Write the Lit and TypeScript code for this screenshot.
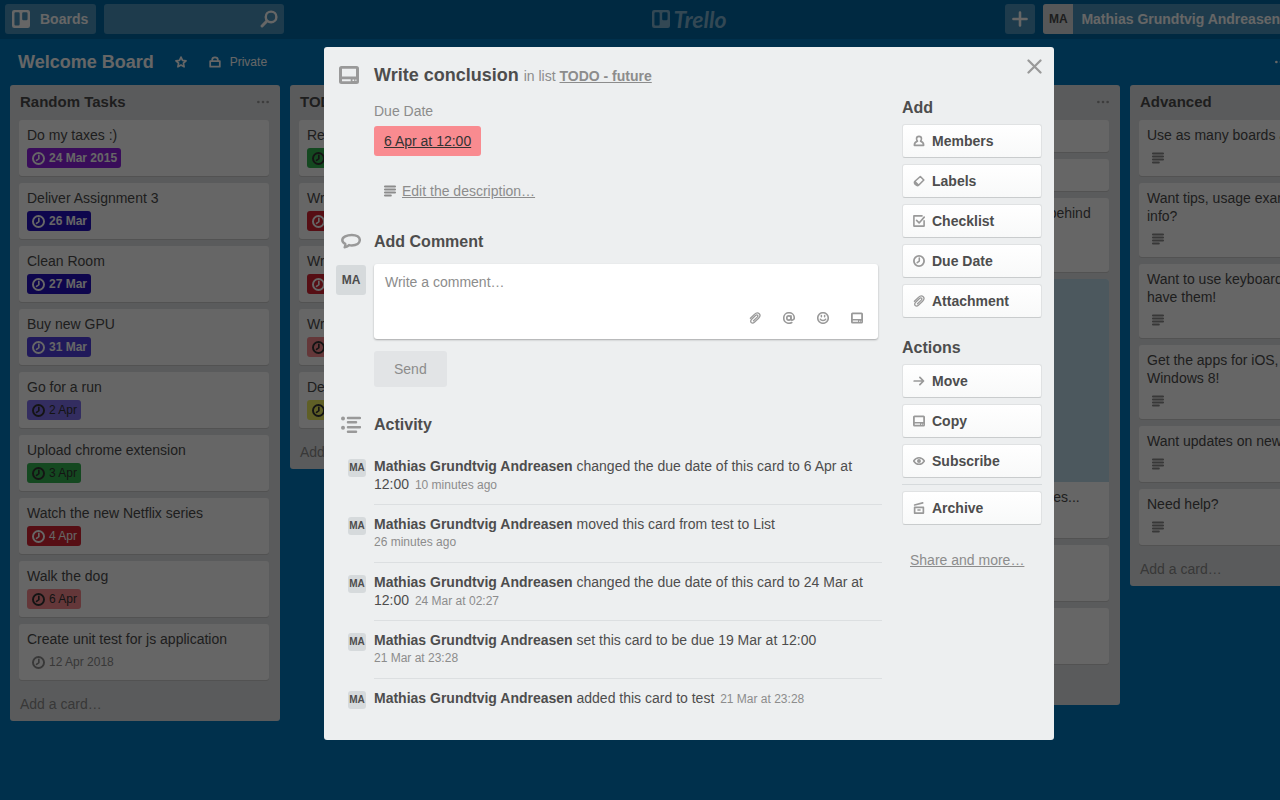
import { LitElement, html, css, svg, nothing } from "lit";
import { customElement, property } from "lit/decorators.js";
import { classMap } from "lit/directives/class-map.js";

type IconName =
  | "card" | "comment" | "activity" | "text" | "clock" | "member" | "label" | "checklist"
  | "attachment" | "move" | "subscribe" | "archive" | "mention" | "emoji" | "close"
  | "search" | "board" | "star" | "lock" | "plus" | "dots" | "info" | "bell";

const icons: Record<IconName, unknown> = {
  card: svg`<path fill-rule="evenodd" d="M2.500 1h15A2.500 2.500 0 0 1 20 3.500v13a2.500 2.500 0 0 1-2.500 2.500h-15A2.500 2.500 0 0 1 0 16.500v-13A2.500 2.500 0 0 1 2.500 1zM3 3.700v7.800h14V3.700zM3 14.200v2.100h8.700v-2.100zm10.500.2v1.700h1.700v-1.700zm2.900 0v1.700h1v-1.700z"/>`,
  comment: svg`<path fill="none" stroke="currentColor" stroke-width="2.500" stroke-linejoin="round" d="M10.800 3c4.800 0 8 2.100 8 5.100s-3.200 5.300-8 5.300c-1 0-1.900-.1-2.700-.3-.9 1.200-2.300 2-4.400 2.200.6-1.100.7-2.200.5-3.400C2.400 11 1.300 9.800 1.300 8.100c0-3 4.600-5.100 9.500-5.100z"/>`,
  activity: svg`<circle cx="2" cy="3.500" r="2"/><circle cx="2" cy="12.800" r="2"/><path fill="none" stroke="currentColor" stroke-width="2.500" stroke-linecap="round" d="M7 3h12M7 7.200h8M7 12.200h12M7 16.700h8"/>`,
  text: svg`<path fill="none" stroke="currentColor" stroke-width="3.100" stroke-linecap="round" d="M1.500 2.500h17M1.500 7.500h17M1.500 12.500h17M1.500 17.500h10"/>`,
  clock: svg`<circle cx="10" cy="10" r="8.500" fill="none" stroke="currentColor" stroke-width="3"/><path fill="none" stroke="currentColor" stroke-width="2.600" stroke-linecap="round" stroke-linejoin="round" d="M10.500 5v5.200L7 12.800"/>`,
  member: svg`<path fill="none" stroke="currentColor" stroke-width="2.700" stroke-linejoin="round" d="M10 2.200c2.700 0 4.100 1.800 4.100 4.200 0 1.600-.6 2.900-1.500 3.800 3.600.9 5 2.900 5.200 7H2.200c.2-4.100 1.600-6.100 5.200-7-.9-.9-1.500-2.200-1.500-3.800C5.900 4 7.300 2.200 10 2.200z"/>`,
  label: svg`<path fill="none" stroke="currentColor" stroke-width="2.700" stroke-linejoin="round" d="M12.200 2.500 18 8.300 9.300 17c-1.300 1.200-3.100.8-5.300-1.300-2-2-2-4-.7-5.300zM3.600 11.200l5 5.200"/>`,
  checklist: svg`<path fill="none" stroke="currentColor" stroke-width="2.700" stroke-linecap="round" stroke-linejoin="round" d="M15 1.500H1.500v17h17V9.500M6 9l4.200 4.200L18.700 3.500"/>`,
  attachment: svg`<path fill="none" stroke="currentColor" stroke-width="2.100" stroke-linecap="round" stroke-linejoin="round" d="M2.300 10.500 9 4c2.700-2.600 6-3 8-1.200 2 2 1.500 5-1 7.500l-6.600 6.400c-2 1.900-4.300 2-5.600.8-1.400-1.500-1.200-3.500.6-5.300l6.400-6.300c1.300-1.200 2.700-1.300 3.500-.5s.7 2-.5 3.200L7.500 14.600"/>`,
  move: svg`<path fill="none" stroke="currentColor" stroke-width="2.900" stroke-linecap="round" stroke-linejoin="round" d="M2 10h15M11.500 4 17.500 10l-6 6"/>`,
  subscribe: svg`<path fill="none" stroke="currentColor" stroke-width="2.500" d="M1 10c2.300-3.700 5.500-5.600 9-5.600s6.700 1.900 9 5.600c-2.300 3.700-5.500 5.600-9 5.600S3.300 13.700 1 10z"/><circle cx="10" cy="10" r="3.300"/>`,
  archive: svg`<path fill="none" stroke="currentColor" stroke-width="2.800" stroke-linejoin="round" d="M2.700 9h14.600v9.500H2.700zM7.300 13.300h5.400"/><path fill="none" stroke="currentColor" stroke-width="2.700" stroke-linecap="round" d="m2.700 5 13.500-3.500"/>`,
  mention: svg`<circle cx="9.800" cy="10" r="3.500" fill="none" stroke="currentColor" stroke-width="2.700"/><path fill="none" stroke="currentColor" stroke-width="2.700" stroke-linecap="round" d="M13.300 6.500v5.300c0 2.700 5.500 2.200 5.500-1.800 0-5-3.900-8.800-8.800-8.800S1.200 5 1.200 10s3.800 8.800 8.800 8.800c1.900 0 3.400-.5 4.600-1.300"/>`,
  emoji: svg`<circle cx="10" cy="10" r="8.800" fill="none" stroke="currentColor" stroke-width="2.700"/><path fill="none" stroke="currentColor" stroke-width="2.500" stroke-linecap="round" d="M7.300 6v2M12.700 6v2M5.500 12c1.500 3 7.500 3 9 0"/>`,
  close: svg`<path fill="none" stroke="currentColor" stroke-width="3" stroke-linecap="round" d="m2 2 16 16M18 2 2 18"/>`,
  search: svg`<circle cx="12.300" cy="7.700" r="5.900" fill="none" stroke="currentColor" stroke-width="2.700"/><path stroke="currentColor" stroke-width="3.300" stroke-linecap="round" d="m7.700 12.300-5.400 5.400"/>`,
  board: svg`<path fill-rule="evenodd" d="M2.500 0h15A2.500 2.500 0 0 1 20 2.500v15a2.500 2.500 0 0 1-2.500 2.500h-15A2.500 2.500 0 0 1 0 17.500v-15A2.500 2.500 0 0 1 2.500 0zM4 2.500A1.300 1.300 0 0 0 2.700 3.800v12A1.300 1.300 0 0 0 4 17.100h3.200a1.300 1.300 0 0 0 1.300-1.300v-12a1.300 1.300 0 0 0-1.300-1.300zm8.600 0a1.300 1.300 0 0 0-1.300 1.300v6.200a1.300 1.300 0 0 0 1.300 1.300H16a1.300 1.300 0 0 0 1.300-1.300V3.800A1.300 1.300 0 0 0 16 2.500z"/>`,
  star: svg`<path fill="none" stroke="currentColor" stroke-width="2.800" stroke-linejoin="round" d="m10 1.800 2.500 5.500 5.900.7-4.400 4 1.200 6L10 15l-5.200 3 1.200-6-4.400-4 5.900-.7z"/>`,
  lock: svg`<path fill="none" stroke="currentColor" stroke-width="2.900" stroke-linejoin="round" d="M2 8.500h16v9.300H2zM5.300 8.500V6.200c0-5.400 9.400-5.400 9.400 0v2.300"/>`,
  plus: svg`<path fill="none" stroke="currentColor" stroke-width="3.200" stroke-linecap="round" d="M10 1.800v16.400M1.800 10h16.400"/>`,
  dots: svg`<circle cx="2.300" cy="10" r="2.200"/><circle cx="10" cy="10" r="2.200"/><circle cx="17.700" cy="10" r="2.200"/>`,
  info: svg`<circle cx="10" cy="10" r="8.500" fill="none" stroke="currentColor" stroke-width="2.200"/><path stroke="currentColor" stroke-width="2.200" d="M10 9v6M10 5v2"/>`,
  bell: svg`<path d="M10 1a5 5 0 0 1 5 5v5l2.500 4h-15L5 11V6a5 5 0 0 1 5-5zM7.500 16.500h5a2.500 2.500 0 0 1-5 0z"/>`,
};

const icon = (name: IconName, size = 12) =>
  html`<svg class="icon" width=${size} height=${size} viewBox="0 0 20 20" fill="currentColor" aria-hidden="true">${icons[name]}</svg>`;

const base = css`
  *, *::before, *::after { box-sizing: border-box; }
  h1, h2, h3, p, ul { margin: 0; padding: 0; }
  ul { list-style: none; }
  button, input, textarea { font: inherit; color: inherit; border: 0; margin: 0; padding: 0; background: none; }
  .icon { display: block; flex: none; }
`;

interface Due { text: string; tone: string; }
interface Card { title: string; due?: Due; description?: boolean; cover?: boolean; }
interface List { title: string; cards: Card[]; }

const due = (text: string, tone: string): Due => ({ text, tone });

const lists: List[] = [
  {
    title: "Random Tasks",
    cards: [
      { title: "Do my taxes :)", due: due("24 Mar 2015", "violet") },
      { title: "Deliver Assignment 3", due: due("26 Mar", "indigo") },
      { title: "Clean Room", due: due("27 Mar", "indigo") },
      { title: "Buy new GPU", due: due("31 Mar", "blue") },
      { title: "Go for a run", due: due("2 Apr", "lavender") },
      { title: "Upload chrome extension", due: due("3 Apr", "green") },
      { title: "Watch the new Netflix series", due: due("4 Apr", "red") },
      { title: "Walk the dog", due: due("6 Apr", "pink") },
      { title: "Create unit test for js application", due: due("12 Apr 2018", "plain") },
    ],
  },
  {
    title: "TODO - future",
    cards: [
      { title: "Read", due: due("3 Apr", "green") },
      { title: "Write", due: due("4 Apr", "red") },
      { title: "Write", due: due("4 Apr", "red") },
      { title: "Write conclusion", due: due("6 Apr", "pink") },
      { title: "Deliver", due: due("8 Apr", "yellow") },
    ],
  },
  { title: "List", cards: [] },
  {
    title: "Basics",
    cards: [
      { title: "Welcome to Trello!" },
      { title: "This is a card." },
      { title: "Click on a card to see what's behind it.", description: true },
      { title: "You can attach pictures and files...", cover: true, description: true },
      { title: "Any kind of hyperlink", description: true },
      { title: "Or checklists.", description: true },
    ],
  },
  {
    title: "Advanced",
    cards: [
      { title: "Use as many boards as you want", description: true },
      { title: "Want tips, usage examples, or API info?", description: true },
      { title: "Want to use keyboard shortcuts? We have them!", description: true },
      { title: "Get the apps for iOS, Android and Windows 8!", description: true },
      { title: "Want updates on new features?", description: true },
      { title: "Need help?", description: true },
    ],
  },
];

@customElement("board-list")
class BoardList extends LitElement {
  @property({ attribute: false }) list!: List;

  static styles = [base, css`
    :host { display: block; flex: none; width: 270px; background: #e2e4e6; border-radius: 3px; }
    .head { display: flex; align-items: center; justify-content: space-between; height: 35px; padding: 0 11px 2px 10px; }
    .head h2 { font-size: 15px; line-height: 18px; font-weight: bold; color: #4d4d4d; }
    .menu { color: #999; cursor: pointer; }
    .cards { display: flex; flex-direction: column; gap: 7px; padding: 0 11px 7px 9px; }
    .card { background: #fff; border-radius: 3px; box-shadow: 0 1px 0 #ccc; cursor: pointer; overflow: hidden; }
    .cover { height: 203px; background: #bfddec; }
    .body { padding: 6px 8px 8px; }
    .title { font-size: 14px; line-height: 18px; color: #4d4d4d; }
    .badge { display: flex; align-items: center; width: fit-content; height: 20px; margin-top: 4px; padding: 0 4px 0 5px; gap: 4px; border-radius: 3px; font-size: 12px; line-height: 18px; color: #8c8c8c; }
    .violet { background: #8f22e0; color: #fff; font-weight: bold; }
    .indigo { background: #2510c0; color: #fff; font-weight: bold; }
    .blue { background: #5040e0; color: #fff; font-weight: bold; }
    .lavender { background: #8070f0; color: #333; }
    .green { background: #34b352; color: #333; }
    .red { background: #d62533; color: #fff; }
    .pink { background: #f98b90; color: #333; }
    .yellow { background: #eeee60; color: #333; }
    .add { display: block; width: 100%; height: 34px; padding: 0 10px; text-align: left; font-size: 14px; line-height: 18px; color: #8c8c8c; cursor: pointer; }
  `];

  render() {
    return html`
      <div class="head">
        <h2>${this.list.title}</h2>
        <button class="menu" aria-label="List menu">${icon("dots")}</button>
      </div>
      <div class="cards">
        ${this.list.cards.map((card) => html`
          <article class="card">
            ${card.cover ? html`<div class="cover"></div>` : nothing}
            <div class="body">
              <p class="title">${card.title}</p>
              ${card.due ? html`<div class=${classMap({ badge: true, [card.due.tone]: true })}>${icon("clock", 13)}<span>${card.due.text}</span></div>` : nothing}
              ${card.description ? html`<div class="badge">${icon("text")}</div>` : nothing}
            </div>
          </article>`)}
      </div>
      <button class="add">Add a card…</button>
    `;
  }
}

interface Entry { action: string; time: string; ownLine?: boolean; }

const entries: Entry[] = [
  { action: "changed the due date of this card to 6 Apr at 12:00", time: "10 minutes ago" },
  { action: "moved this card from test to List", time: "26 minutes ago", ownLine: true },
  { action: "changed the due date of this card to 24 Mar at 12:00", time: "24 Mar at 02:27" },
  { action: "set this card to be due 19 Mar at 12:00", time: "21 Mar at 23:28", ownLine: true },
  { action: "added this card to test", time: "21 Mar at 23:28" },
];

@customElement("card-dialog")
class CardDialog extends LitElement {
  static styles = [base, css`
    :host { display: block; width: 730px; background: #edeff0; border-radius: 3px; color: #4d4d4d; font-size: 14px; line-height: 18px; }
    .top { display: flex; align-items: flex-start; padding: 12px 12px 0 50px; }
    .heading { flex: 1; display: flex; align-items: baseline; padding-top: 5px; gap: 5px; color: #8c8c8c; }
    .heading h1 { position: relative; font-size: 18px; line-height: 22px; color: #4d4d4d; }
    .heading a { font-weight: bold; color: #8c8c8c; }
    .side { position: absolute; right: 100%; top: 50%; transform: translateY(-50%); color: #999; }
    .side.large { margin-right: 15px; }
    .side.medium { margin-right: 13px; }
    .close { color: #999; cursor: pointer; }
    .columns { display: flex; gap: 20px; padding: 12px 12px 22px 50px; }
    .main { flex: 1; min-width: 0; padding-top: 4px; }
    .label { color: #8c8c8c; }
    .due { display: inline-block; height: 30px; padding: 6px 10px; margin-top: 6px; background: #f98b90; border-radius: 3px; color: #333; }
    .describe { display: flex; align-items: center; width: fit-content; gap: 6px; margin: 26px 10px 0; color: #8c8c8c; text-decoration: underline; }
    h2 { font-size: 16px; line-height: 20px; font-weight: bold; color: #4d4d4d; }
    .main h2 { position: relative; }
    .comment-title { margin-top: 32px; }
    .compose { position: relative; margin: 12px 4px 0 0; }
    .avatar { display: grid; place-items: center; background: #d6dadc; border-radius: 3px; font-weight: bold; color: #4d4d4d; }
    .me { position: absolute; right: 100%; top: 1px; width: 30px; height: 30px; margin-right: 8px; font-size: 12px; }
    .box { background: #fff; border-radius: 3px; box-shadow: 0 1px 2px rgba(0, 0, 0, 0.3); }
    .box textarea { display: block; width: 100%; height: 44px; padding: 9px 11px 0; resize: none; outline: 0; }
    .box textarea::placeholder { color: #8c8c8c; opacity: 1; }
    .tools { display: flex; justify-content: flex-end; padding: 0 4px 11px; color: #999; }
    .tools button { display: grid; place-items: center; width: 34px; height: 20px; cursor: pointer; }
    .send { height: 36px; margin-top: 12px; padding: 0 20px; background: #e2e4e6; border-radius: 3px; color: #8c8c8c; }
    .activity-title { margin: 28px 0 12px; }
    .entry { position: relative; padding: 10px 0 11px; }
    .entry + .entry { border-top: 1px solid #dcdfe1; }
    .entry .avatar { position: absolute; right: 100%; top: 12px; width: 18px; height: 18px; margin-right: 8px; font-size: 10px; }
    .entry time { margin-left: 2px; font-size: 12px; line-height: 12px; color: #8c8c8c; }
    .entry .own-line { display: block; margin-left: 0; line-height: 18px; }
    aside { width: 140px; }
    .group { display: flex; flex-direction: column; gap: 6px; }
    .actions { margin-top: 20px; }
    .action { display: flex; align-items: center; gap: 7px; height: 34px; padding: 0 10px; background: linear-gradient(#fff, #f8f9f9); border: 1px solid #e0e2e3; border-bottom-color: #c9cccd; border-radius: 3px; font-weight: bold; color: #4d4d4d; cursor: pointer; }
    .action .icon { color: #999; }
    .group hr { width: 100%; height: 1px; margin: 0; border: 0; background: #d6dadc; }
    .share { display: block; margin: 26px 8px 0; color: #8c8c8c; }
  `];

  private action(name: IconName, label: string) {
    return html`<button class="action">${icon(name)}${label}</button>`;
  }

  render() {
    return html`
      <header class="top">
        <div class="heading">
          <h1><span class="side large">${icon("card", 20)}</span>Write conclusion</h1>
          <span>in list <a href="#list">TODO - future</a></span>
        </div>
        <button class="close" aria-label="Close">${icon("close", 15)}</button>
      </header>
      <div class="columns">
        <section class="main">
          <p class="label">Due Date</p>
          <a class="due" href="#due">6 Apr at 12:00</a>
          <a class="describe" href="#description">${icon("text")}<span>Edit the description…</span></a>
          <h2 class="comment-title"><span class="side medium">${icon("comment", 20)}</span>Add Comment</h2>
          <div class="compose">
            <span class="avatar me">MA</span>
            <div class="box">
              <textarea aria-label="Comment" placeholder="Write a comment…"></textarea>
              <div class="tools">
                <button aria-label="Attach">${icon("attachment")}</button>
                <button aria-label="Mention">${icon("mention")}</button>
                <button aria-label="Emoji">${icon("emoji")}</button>
                <button aria-label="Card">${icon("card")}</button>
              </div>
            </div>
          </div>
          <button class="send">Send</button>
          <h2 class="activity-title"><span class="side medium">${icon("activity", 20)}</span>Activity</h2>
          ${entries.map((entry) => html`
            <div class="entry">
              <span class="avatar">MA</span>
              <b>Mathias Grundtvig Andreasen</b> ${entry.action}
              <time class=${classMap({ "own-line": !!entry.ownLine })}>${entry.time}</time>
            </div>`)}
        </section>
        <aside>
          <div class="group">
            <h2>Add</h2>
            ${this.action("member", "Members")}
            ${this.action("label", "Labels")}
            ${this.action("checklist", "Checklist")}
            ${this.action("clock", "Due Date")}
            ${this.action("attachment", "Attachment")}
          </div>
          <div class="group actions">
            <h2>Actions</h2>
            ${this.action("move", "Move")}
            ${this.action("card", "Copy")}
            ${this.action("subscribe", "Subscribe")}
            <hr />
            ${this.action("archive", "Archive")}
          </div>
          <a class="share" href="#share">Share and more…</a>
        </aside>
      </div>
    `;
  }
}

@customElement("app-root")
class AppRoot extends LitElement {
  static styles = [base, css`
    :host { display: block; overflow: hidden; font-family: "Liberation Sans", Arial, sans-serif; font-size: 14px; line-height: 18px; }
    .app { position: relative; min-width: 1378px; min-height: 100vh; background: #0079bf; color: #fff; }
    .header { display: grid; grid-template-columns: 1fr auto 1fr; align-items: center; padding: 4px 5px 5px; background: #0067a3; }
    .left, .right { display: flex; gap: 8px; }
    .right { justify-content: flex-end; }
    .pill { display: flex; align-items: center; justify-content: center; height: 30px; min-width: 30px; background: #4c95be; border-radius: 3px; font-weight: bold; cursor: pointer; }
    .boards { gap: 10px; padding: 0 8px 0 7px; }
    .search { display: flex; align-items: center; width: 180px; height: 30px; padding: 0 6px 0 8px; background: #4c95be; border-radius: 3px; }
    .search input { flex: 1; min-width: 0; outline: 0; }
    .logo { display: flex; align-items: center; gap: 4px; color: #80b3d1; font-family: Lato, sans-serif; font-size: 23px; line-height: 28px; font-weight: bold; font-style: italic; text-decoration: none; }
    .profile { padding-right: 17px; gap: 8px; overflow: hidden; }
    .initials { display: grid; place-items: center; width: 30px; height: 30px; background: #d6dadc; color: #4d4d4d; font-size: 12px; }
    .board-head { display: flex; align-items: center; height: 46px; padding: 0 8px 0 18px; }
    .board-head h1 { font-size: 18px; line-height: 22px; margin-right: 21px; }
    .board-head button { display: flex; align-items: center; gap: 9px; cursor: pointer; }
    .privacy { margin-left: 22px; font-size: 12px; }
    .show-menu { margin-left: auto; text-decoration: underline; }
    .lists { display: flex; align-items: flex-start; gap: 10px; padding: 0 10px; }
    .overlay { position: absolute; inset: 0; display: flex; align-items: flex-start; justify-content: center; padding-top: 47px; background: rgba(0, 0, 0, 0.6); }
  `];

  render() {
    return html`
      <div class="app">
        <header class="header">
          <div class="left">
            <button class="pill boards">${icon("board", 18)}Boards</button>
            <label class="search"><input type="text" aria-label="Search" />${icon("search", 18)}</label>
          </div>
          <a class="logo" href="#home">${icon("board", 18)}<span>Trello</span></a>
          <div class="right">
            <button class="pill" aria-label="Create">${icon("plus", 16)}</button>
            <button class="pill profile"><span class="initials">MA</span>Mathias Grundtvig Andreasen</button>
            <button class="pill" aria-label="Information">${icon("info", 16)}</button>
            <button class="pill" aria-label="Notifications">${icon("bell", 16)}</button>
          </div>
        </header>
        <div class="board-head">
          <h1>Welcome Board</h1>
          <button aria-label="Star board">${icon("star")}</button>
          <button class="privacy">${icon("lock")}Private</button>
          <button class="show-menu">${icon("dots")}Show Menu</button>
        </div>
        <main class="lists">${lists.map((list) => html`<board-list .list=${list}></board-list>`)}</main>
        <div class="overlay"><card-dialog role="dialog" aria-label="Write conclusion"></card-dialog></div>
      </div>
    `;
  }
}
